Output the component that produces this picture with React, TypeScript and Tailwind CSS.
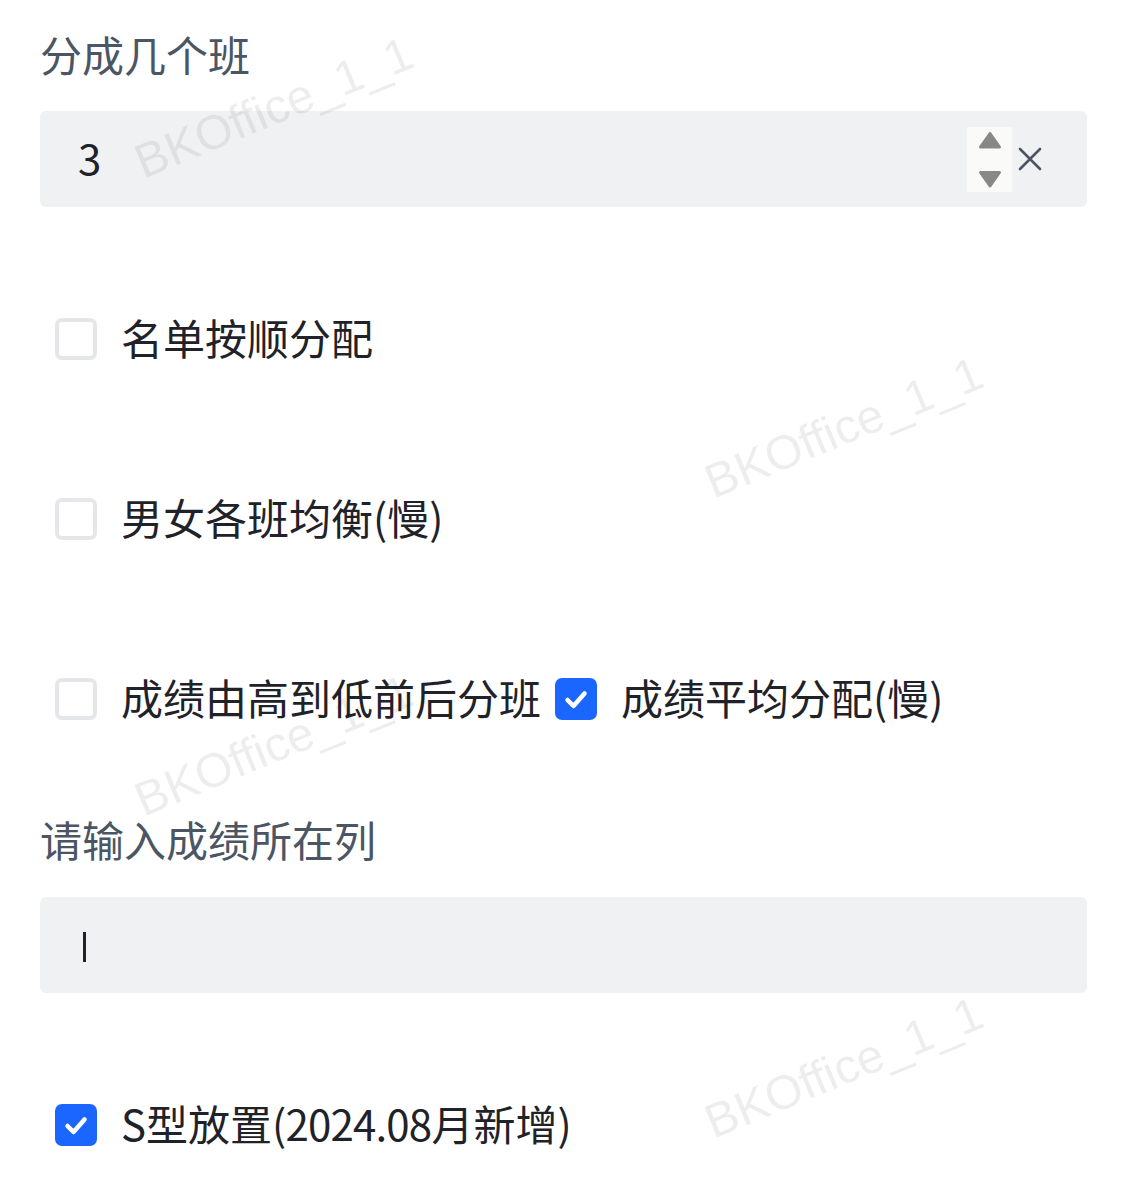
import React from "react";

function Box({ checked }: { checked?: boolean }) {
  if (checked) {
    return (
      <span className="flex h-[42px] w-[42px] shrink-0 items-center justify-center rounded-[7px] bg-[#1a66ff]">
        <svg width="42" height="42" viewBox="0 0 42 42" fill="none">
          <path d="M12.5 22 L18.5 28 L29.5 15.5" stroke="white" strokeWidth="4.5" strokeLinecap="round" strokeLinejoin="round" />
        </svg>
      </span>
    );
  }
  return <span className="block h-[42px] w-[42px] shrink-0 rounded-[7px] border-[4px] border-[#e5e6ea] bg-white" />;
}

function Item({ checked, children }: { checked?: boolean; children: React.ReactNode }) {
  return (
    <div className="flex items-center gap-[24px]">
      <Box checked={checked} />
      <span className="-mt-[4px] whitespace-nowrap text-[42px] leading-none text-[#1f2329]">{children}</span>
    </div>
  );
}

function Watermark({ cls }: { cls: string }) {
  return (
    <span
      className={
        "pointer-events-none absolute origin-[0_41px] rotate-[-22.5deg] whitespace-nowrap font-['Liberation_Sans',sans-serif] text-[48px] leading-none text-black/[0.07] " +
        cls
      }
    >
      BKOffice_1_1
    </span>
  );
}

export default function App() {
  return (
    <div className="relative min-h-[1185px] overflow-hidden bg-white pl-[40px] pr-[44px] font-['Noto_Sans_CJK_SC',sans-serif]">
      <div className="flex h-[111px] items-center pb-[4px] text-[42px] leading-none text-[#4b5563]">分成几个班</div>
      <div className="flex h-[96px] items-center rounded-[6px] bg-[#f0f1f3] pl-[38px] pr-[45px]">
        <span className="-mt-[4px] flex-1 text-[42px] leading-none text-[#1f2329]">3</span>
        <div className="flex h-[65px] w-[45px] items-center justify-center bg-[#fafaf8]">
          <svg width="45" height="65" viewBox="0 0 45 65">
            <path d="M23 6.5 L32.5 20 L13.5 20 Z" fill="#888" stroke="#888" strokeWidth="3" strokeLinejoin="round" />
            <path d="M13.5 45.5 L32.5 45.5 L23 59 Z" fill="#888" stroke="#888" strokeWidth="3" strokeLinejoin="round" />
          </svg>
        </div>
        <svg className="ml-[6px]" width="24" height="24" viewBox="0 0 24 24" fill="none">
          <path d="M2 2 L22 22 M22 2 L2 22" stroke="#4b5563" strokeWidth="2.6" strokeLinecap="round" />
        </svg>
      </div>

      <div className="mt-[42px] flex h-[180px] items-center pl-[15px]">
        <Item>名单按顺分配</Item>
      </div>
      <div className="flex h-[180px] items-center pl-[15px]">
        <Item>男女各班均衡(慢)</Item>
      </div>
      <div className="flex h-[180px] items-center gap-[14px] pl-[15px]">
        <Item>成绩由高到低前后分班</Item>
        <Item checked>成绩平均分配(慢)</Item>
      </div>

      <div className="flex h-[108px] items-center pb-[8px] text-[42px] leading-none text-[#4b5563]">请输入成绩所在列</div>
      <div className="flex h-[96px] items-center rounded-[6px] bg-[#f0f1f3] pl-[43px]">
        <span className="mt-[4px] block h-[30px] w-[3px] bg-[#1f2329]" />
      </div>

      <div className="mt-[87px] flex h-[90px] items-center pl-[15px]">
        <Item checked>
          S型放置<span className="tracking-[-0.8px]">(2024.08</span>月新增)
        </Item>
      </div>

      <Watermark cls="left-[144px] top-[139px]" />
      <Watermark cls="left-[714px] top-[459px]" />
      <Watermark cls="left-[144px] top-[777px]" />
      <Watermark cls="left-[714px] top-[1099px]" />
    </div>
  );
}
